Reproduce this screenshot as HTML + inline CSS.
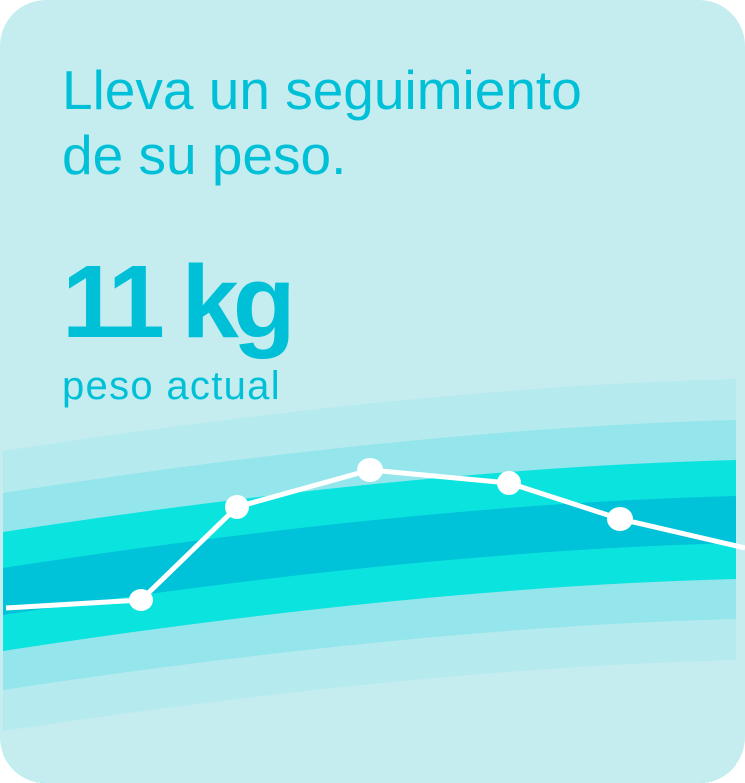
<!DOCTYPE html>
<html><head><meta charset="utf-8"><style>
html,body{margin:0;padding:0;background:#fff;}
.card{position:relative;width:745px;height:783px;background:#c5edef;border-radius:46px;overflow:hidden;font-family:"Liberation Sans",sans-serif;color:#00c0d8;}
.t{position:absolute;left:62px;font-size:55px;line-height:1;white-space:nowrap;}
svg{position:absolute;left:0;top:0;}
</style></head><body>
<div class="card">
<svg width="745" height="783" viewBox="0 0 745 783">
<path d="M3,451 Q420,387 736,379 L736,783 L3,783Z" fill="#b5eaee"/>
<path d="M3,493 Q420,428 736,420 L736,783 L3,783Z" fill="#95e6ec"/>
<path d="M3,532 Q420,468 736,460 L736,783 L3,783Z" fill="#0be3df"/>
<path d="M3,568 Q420,504 736,496 L736,783 L3,783Z" fill="#00c2d8"/>
<path d="M3,615 Q420,551 736,543 L736,783 L3,783Z" fill="#0be3df"/>
<path d="M3,651 Q420,587 736,579 L736,783 L3,783Z" fill="#95e6ec"/>
<path d="M3,690 Q420,627 736,619 L736,783 L3,783Z" fill="#b5eaee"/>
<path d="M3,731 Q420,668 736,660 L736,783 L3,783Z" fill="#c5edef"/>
<polyline points="6,608 141,600 237,507 370,470 509,483 620,519 745,548" fill="none" stroke="#fff" stroke-width="5"/>
<g fill="#fff">
<ellipse cx="141" cy="600" rx="12" ry="11"/>
<ellipse cx="237" cy="507" rx="12" ry="12"/>
<ellipse cx="370" cy="470" rx="13" ry="12"/>
<ellipse cx="509" cy="483" rx="12" ry="12"/>
<ellipse cx="620" cy="519" rx="13" ry="12"/>
</g>
</svg>
<div class="t" style="top:63px;">Lleva un seguimiento</div>
<div class="t" style="top:128px;">de su peso.</div>
<div class="t" style="top:250px;font-size:103px;font-weight:bold;letter-spacing:-6px;">11 kg</div>
<div class="t" style="top:366px;font-size:40px;letter-spacing:1.3px;">peso actual</div>
</div>
</body></html>
